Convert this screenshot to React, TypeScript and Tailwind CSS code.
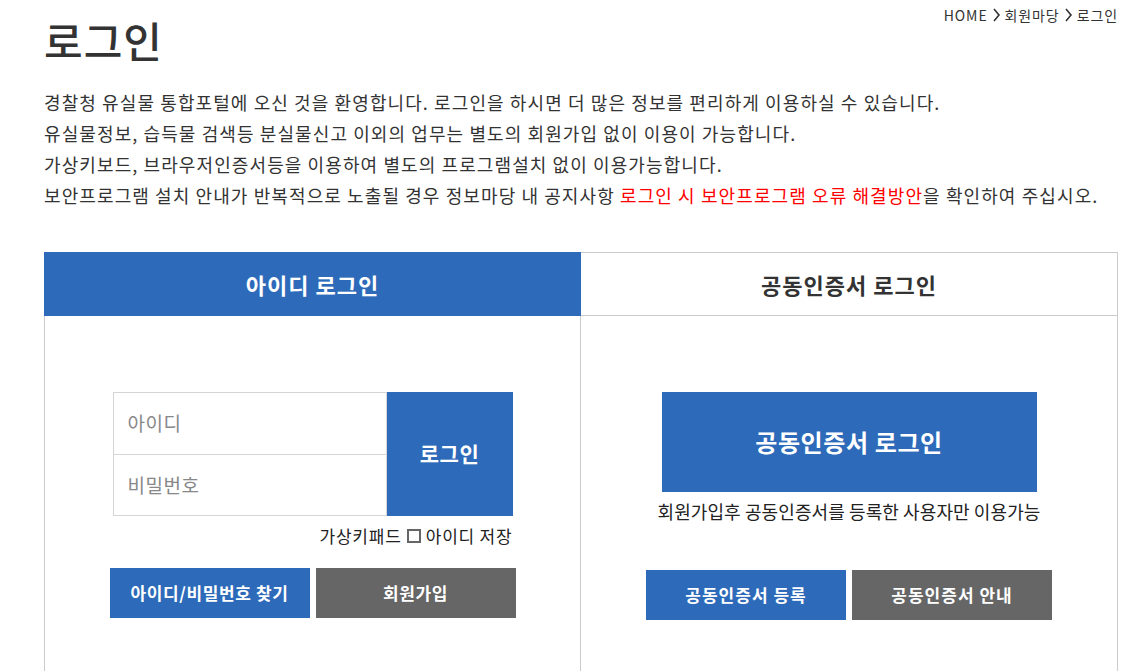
import React from "react";

const font = { fontFamily: '"Noto Sans CJK KR", "Noto Sans", sans-serif' };

function Chev() {
  return (
    <svg width="9" height="16" viewBox="0 0 9 16" className="mx-[4px]">
      <path d="M2 2 L7 8 L2 14" fill="none" stroke="#333" strokeWidth="1.6" />
    </svg>
  );
}

export default function App() {
  return (
    <div className="min-h-[671px] bg-white text-[#333]" style={font}>
      <div className="ml-[44px] w-[1074px]">
        <div className="flex items-start justify-between">
          <h1 className="mt-[13px] text-[42px] leading-[54px] font-medium tracking-[1px] text-[#333]">로그인</h1>
          <div className="mt-[5px] text-[14px] leading-[20px] tracking-[0.9px] text-[#333] flex items-center">
            <span>HOME</span>
            <Chev />
            <span>회원마당</span>
            <Chev />
            <span>로그인</span>
          </div>
        </div>
        <div className="mt-[20px] text-[18px] leading-[31px] tracking-[1.1px] text-[#333]">
          <p>경찰청 유실물 통합포털에 오신 것을 환영합니다. 로그인을 하시면 더 많은 정보를 편리하게 이용하실 수 있습니다.</p>
          <p>유실물정보, 습득물 검색등 분실물신고 이외의 업무는 별도의 회원가입 없이 이용이 가능합니다.</p>
          <p>가상키보드, 브라우저인증서등을 이용하여 별도의 프로그램설치 없이 이용가능합니다.</p>
          <p>
            보안프로그램 설치 안내가 반복적으로 노출될 경우 정보마당 내 공지사항{" "}
            <span className="text-[#ff0000]">로그인 시 보안프로그램 오류 해결방안</span>을 확인하여 주십시오.
          </p>
        </div>

        <div className="mt-[41px] grid grid-cols-2">
          <div className="h-[64px] bg-[#2d6bba] flex items-center justify-center text-white text-[22px] tracking-[1px] font-semibold">
            아이디 로그인
          </div>
          <div className="h-[64px] border-t border-r border-b border-[#ccc] flex items-center justify-center text-[#333] text-[22px] tracking-[1px] font-semibold">
            공동인증서 로그인
          </div>

          <div className="border-l border-r border-[#ccc] h-[356px] pt-[76px] flex flex-col items-center">
            <div className="flex w-[400px]">
              <div className="w-[274px] border border-[#d5d5d5] flex flex-col">
                <div className="h-[62px] border-b border-[#d5d5d5] flex items-center pl-[14px] text-[19px] tracking-[0.5px] text-[#888]">
                  아이디
                </div>
                <div className="h-[60px] flex items-center pl-[14px] text-[19px] tracking-[0.5px] text-[#888]">비밀번호</div>
              </div>
              <div className="w-[126px] h-[124px] bg-[#2d6bba] flex items-center justify-center text-white text-[21px] tracking-[0.5px] font-bold">
                로그인
              </div>
            </div>
            <div className="w-[400px] flex justify-end items-center mt-[8px] text-[17px] leading-[24px] tracking-[0.8px] text-[#222]">
              <span>가상키패드</span>
              <span className="inline-block w-[14px] h-[14px] border-2 border-[#666] mx-[5px]"></span>
              <span>아이디 저장</span>
            </div>
            <div className="flex gap-[6px] mt-[20px]">
              <div className="w-[200px] h-[50px] bg-[#2d6bba] flex items-center justify-center text-white text-[17px] tracking-[0.6px] font-bold">
                아이디/비밀번호 찾기
              </div>
              <div className="w-[200px] h-[50px] bg-[#666] flex items-center justify-center text-white text-[17px] tracking-[0.6px] font-bold">
                회원가입
              </div>
            </div>
          </div>

          <div className="border-r border-[#ccc] h-[356px] pt-[76px] flex flex-col items-center">
            <div className="w-[375px] h-[100px] bg-[#2d6bba] flex items-center justify-center text-white text-[24px] tracking-[0.6px] font-bold">
              공동인증서 로그인
            </div>
            <div className="mt-[6px] text-[18px] leading-[26px] tracking-[0.1px] text-[#222]">회원가입후 공동인증서를 등록한 사용자만 이용가능</div>
            <div className="flex gap-[6px] mt-[46px]">
              <div className="w-[200px] h-[50px] bg-[#2d6bba] flex items-center justify-center text-white text-[17px] tracking-[1px] font-bold">
                공동인증서 등록
              </div>
              <div className="w-[200px] h-[50px] bg-[#666] flex items-center justify-center text-white text-[17px] tracking-[1px] font-bold">
                공동인증서 안내
              </div>
            </div>
          </div>
        </div>
      </div>
    </div>
  );
}
